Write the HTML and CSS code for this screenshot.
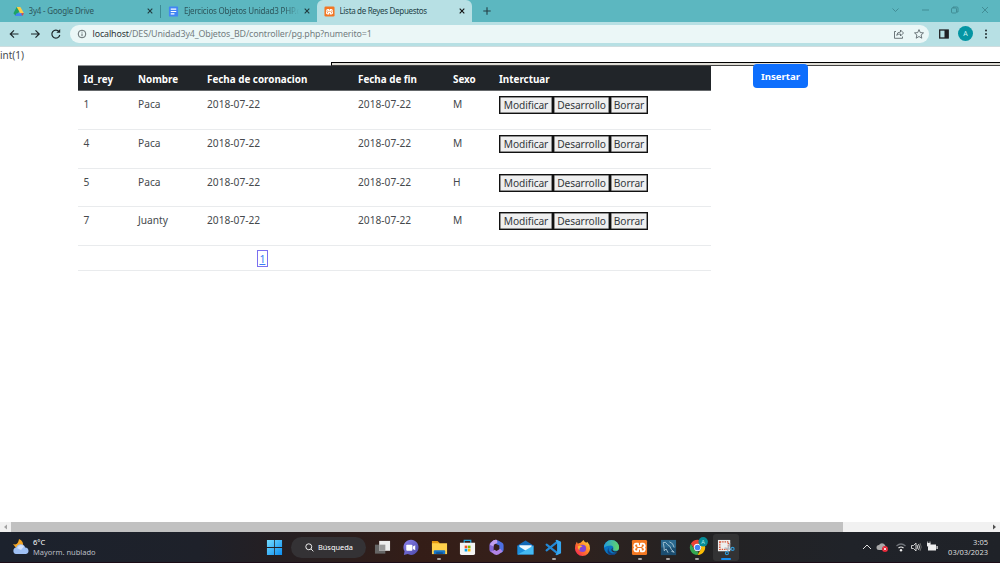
FILE: index.html
```html
<!DOCTYPE html>
<html lang="es">
<head>
<meta charset="utf-8">
<title>Lista de Reyes Depuestos</title>
<link rel="stylesheet" href="styles.css">
</head>
<body>
<div class="screen">
  <header class="tabs">
    <div class="tab tab-drive">
      <svg class="fav" viewBox="0 0 12 12"><path fill="#1fa463" d="M4 1h2L8 4.500 3 11 .5 8z"/><path fill="#ffcf48" d="M4 1h4l4 7H8z"/><path fill="#4285f4" d="M4 8h8l-2 3H2z"/><path fill="#ea4335" d="M9 8h3l-2 3z"/></svg>
      <span class="tab-title t1">3y4 - Google Drive</span>
      <svg class="close" viewBox="0 0 6 6"><path d="M.7.7l4.600 4.600M5.300.7L.7 5.300"/></svg>
    </div>
    <div class="tab tab-docs">
      <svg class="fav" viewBox="0 0 12 12"><rect x="1" y=".5" width="10" height="11" rx="1" fill="#4285f4"/><path stroke="#fff" stroke-width="1.300" d="M3 3.500h6M3 6h6M3 8.500h4"/></svg>
      <span class="tab-title t2">Ejercicios Objetos Unidad3 PHP.d</span>
      <svg class="close" viewBox="0 0 6 6"><path d="M.7.7l4.600 4.600M5.300.7L.7 5.300"/></svg>
    </div>
    <div class="tab tab-active">
      <svg class="fav" viewBox="0 0 12 12"><rect x=".5" y=".5" width="11" height="11" rx="1.500" fill="#f37623"/><path fill="none" stroke="#fff" stroke-width="1.300" d="M5 4H4a1 1 0 0 0 0 2 1 1 0 0 0 0 2.500h1V7h2v1.500h1A1 1 0 0 0 8 6a1 1 0 0 0 0-2H7v1.200H5z"/></svg>
      <span class="tab-title t3">Lista de Reyes Depuestos</span>
      <svg class="close dark" viewBox="0 0 6 6"><path d="M.7.7l4.600 4.600M5.300.7L.7 5.300"/></svg>
    </div>
    <svg class="newtab" viewBox="0 0 8 8"><path d="M4 .3v7.400M.3 4h7.400"/></svg>
    <svg class="wincontrols" viewBox="0 0 100 12"><path d="M2.500 4.500l3 3 3-3M32 6h7M92 3l6 6M98 3l-6 6"/><rect x="61.500" y="4" width="5" height="5" rx="1"/><path d="M63 4V3h4q1 0 1 1v4h-1"/></svg>
  </header>
  <nav class="toolbar">
    <svg class="navicons" viewBox="0 0 56 12"><path d="M9.500 6H1.300M5 2.300L1.300 6 5 9.700M22 6h8.200M26.500 2.300L30.200 6l-3.700 3.700M50 3.600A4 4 0 1 0 50.800 7"/><path class="solid" d="M51.200 1v3.800h-3.800z"/></svg>
    <div class="address">
      <svg class="info" viewBox="0 0 10 10"><circle cx="5" cy="5" r="3.800"/><path d="M5 4.500v2.700M5 2.700v.9"/></svg>
      <span class="url"><b>localhost</b>/DES/Unidad3y4_Objetos_BD/controller/pg.php?numerito=1</span>
      <svg class="actions" viewBox="0 0 32 12"><path d="M2 3.500H.5v6.800h8V8.500M2.700 7.300Q3 4 6.500 4V2l3 3-3 3V6Q4 6 2.700 7.300z"/><path d="M25 1.600l1.300 3 3.200.3-2.400 2.100.7 3.200L25 8.500l-2.800 1.700.7-3.200-2.400-2.100 3.200-.3z"/></svg>
    </div>
    <svg class="sidepanel" viewBox="0 0 10 10"><rect x=".7" y="1" width="8.500" height="8" fill="none" stroke="#202124" stroke-width="1.300"/><path fill="#202124" d="M5.500 1h3.700v8H5.500z"/></svg>
    <span class="avatar">A</span>
    <svg class="more" viewBox="0 0 4 12"><circle cx="2" cy="2.400" r="1"/><circle cx="2" cy="6" r="1"/><circle cx="2" cy="9.600" r="1"/></svg>
  </nav>
  <main class="page">
    <p class="dump">int(1)</p>
    <div class="overflow-box"></div>
    <div class="content">
      <div class="table">
        <div class="row head"><span>Id_rey</span><span>Nombre</span><span>Fecha de coronacion</span><span>Fecha de fin</span><span>Sexo</span><span>Interctuar</span></div>
        <div class="row"><span>1</span><span>Paca</span><span>2018-07-22</span><span>2018-07-22</span><span>M</span><div class="buttons"><button class="b1">Modificar</button><button class="b2">Desarrollo</button><button class="b3">Borrar</button></div></div>
        <div class="row"><span>4</span><span>Paca</span><span>2018-07-22</span><span>2018-07-22</span><span>M</span><div class="buttons"><button class="b1">Modificar</button><button class="b2">Desarrollo</button><button class="b3">Borrar</button></div></div>
        <div class="row"><span>5</span><span>Paca</span><span>2018-07-22</span><span>2018-07-22</span><span>H</span><div class="buttons"><button class="b1">Modificar</button><button class="b2">Desarrollo</button><button class="b3">Borrar</button></div></div>
        <div class="row last"><span>7</span><span>Juanty</span><span>2018-07-22</span><span>2018-07-22</span><span>M</span><div class="buttons"><button class="b1">Modificar</button><button class="b2">Desarrollo</button><button class="b3">Borrar</button></div></div>
        <div class="pager"><a class="pagelink">1</a></div>
      </div>
      <button class="insert">Insertar</button>
    </div>
  </main>
  <div class="scrollbar">
    <svg class="arrow" viewBox="0 0 11 10"><path fill="#a3a3a3" d="M7 2.500v5L4 5z"/></svg>
    <div class="thumb"></div>
    <svg class="arrow right" viewBox="0 0 11 10"><path fill="#505050" d="M4 2.500v5L7 5z"/></svg>
  </div>
  <footer class="taskbar">
    <svg class="weather" viewBox="0 0 18 18"><path fill="#f4a523" d="M7 1q5 2 4 8L4 10 1 6q5 2 6-5z"/><path fill="#9fc0f4" d="M4 16a3.300 3.300 0 0 1 .2-6.500 4.800 4.800 0 0 1 9 0A3.300 3.300 0 0 1 14 16z"/><path fill="#d2e2fd" d="M5 10q3-5 7-1.500L9 12z"/></svg>
    <div class="forecast"><span class="deg">6°C</span><span>Mayorm. nublado</span></div>
    <div class="apps">
      <svg class="app start" viewBox="0 0 18 18"><defs><linearGradient id="win" x2="1" y2="1"><stop stop-color="#74dcff"/><stop offset="1" stop-color="#0c8ef0"/></linearGradient></defs><path fill="url(#win)" d="M1 1h7.600v7.600H1zM9.400 1H17v7.600H9.400zM1 9.400h7.600V17H1zM9.400 9.400H17V17H9.400z"/></svg>
      <div class="search"><svg viewBox="0 0 10 10"><circle cx="4.200" cy="4.200" r="3.300"/><path d="M6.700 6.700L9.300 9.300"/></svg><span>Búsqueda</span></div>
      <div class="slot"><svg class="app" viewBox="0 0 18 18"><path fill="#666" d="M1 6h11v9.500H1z"/><path fill="#eee" d="M5.500 2H17v10.500H5.500z"/><path fill="#999" d="M5.500 6H12v6.500H5.500z"/></svg></div>
      <div class="slot"><svg class="app" viewBox="0 0 18 18"><defs><linearGradient id="chat" x2="1" y2="1"><stop stop-color="#8d83ee"/><stop offset="1" stop-color="#4947a8"/></linearGradient></defs><path fill="url(#chat)" d="M2 17l.7-4A8 8 0 1 1 6 16z"/><rect x="4.500" y="6" width="6.500" height="6.500" rx="1" fill="#fff"/><path fill="#fff" d="M11.500 8l2.500-1.500v5.500l-2.500-1.500z"/></svg></div>
      <div class="slot open"><svg class="app" viewBox="0 0 18 18"><path fill="#e59a13" d="M1 2h6l2 2v4H1z"/><path fill="#ffd04b" d="M1 4.500h16V16H1z"/><path fill="#1877c9" d="M4 12h10q1 0 1 1v3H3v-3q0-1 1-1z"/><path fill="#0c559c" d="M5.500 14h7v2h-7z"/></svg></div>
      <div class="slot"><svg class="app" viewBox="0 0 18 18"><path d="M5.500 5V1.500h7V5" fill="none" stroke="#24a7df" stroke-width="1.200"/><path fill="#f3f3f3" d="M1 4h16v11q0 2-2 2H3q-2 0-2-2z"/><path fill="#f25022" d="M6 7h2.800v2.800H6z"/><path fill="#7fba00" d="M9.400 7h2.800v2.800H9.400z"/><path fill="#00a4ef" d="M6 10.400h2.800v2.800H6z"/><path fill="#ffb900" d="M9.400 10.400h2.800v2.800H9.400z"/></svg></div>
      <div class="slot"><svg class="app" viewBox="0 0 18 18"><path fill="#4d6fe0" d="M10 1l5 3q1.500 1 1.500 2.500v5q0 1.500-1.500 2.500l-2 1.200-1-4.200V7L8 5z"/><path fill="#8568d6" d="M9.500 1Q6 .5 4 3 1.500 4 1.500 6.500v5q0 2 2 2.800L6 12V6l2-1.500z"/><path fill="#c1a0ee" d="M9.500 1Q6 .5 4 3L2 6l4 2V6l4-2z"/><path fill="#b184e5" d="M3 13.500l4-2 2 1.200 4-2.500 2.500 3L11 16.500q-2 1-4 0z"/></svg></div>
      <div class="slot"><svg class="app" viewBox="0 0 18 18"><path fill="#1269b8" d="M.5 7L9 1.500 17.500 7v9.500H.5z"/><path fill="#eef9ff" d="M2.500 6.500h13v4L9 13l-6.500-2.500z"/><path fill="#1b8fdd" d="M.5 7L11 13.500.5 16.500z"/><path fill="#45baf3" d="M17.500 7v9.500H.5L9 11.800z"/></svg></div>
      <div class="slot open"><svg class="app" viewBox="0 0 18 18"><path fill="none" stroke="#2388d5" stroke-width="2.300" stroke-linejoin="round" stroke-linecap="round" d="M13 3L1.700 12M1.700 6L13 15"/><path fill="#35a5ee" d="M12.500.7L17 2.800v12.400l-4.500 2.100-1.500-1 1.800-2V3.700L11 1.700z"/></svg></div>
      <div class="slot"><svg class="app" viewBox="0 0 18 18"><defs><linearGradient id="fox" x1="1" x2="0" y2="1"><stop stop-color="#ffe33b"/><stop offset=".5" stop-color="#ff7929"/><stop offset="1" stop-color="#f4155c"/></linearGradient></defs><path fill="url(#fox)" d="M3 3l1 2q2-1 3-1l3-3q1 2 3 3l1-1q3 3 3 7a8 8 0 0 1-16 0q0-4 2-7z"/><circle cx="9" cy="10" r="3.800" fill="#8045d4"/><path fill="#ffb931" d="M4 8q3-2 5 0-4 1-3 4-2-1-2-4z"/></svg></div>
      <div class="slot"><svg class="app" viewBox="0 0 18 18"><defs><linearGradient id="edge" x2="1"><stop stop-color="#229bdc"/><stop offset="1" stop-color="#65d765"/></linearGradient></defs><circle cx="9" cy="9" r="8" fill="#0873c2"/><path fill="url(#edge)" d="M1 9a8 8 0 0 1 16 0q0 4-5 3.500-2-.5-1-2.500 0-3-3-3-4 0-7 2z"/><path fill="#133f7d" d="M6 9q-1 4 3 6 3 1 6-1-2 3-6 3-5-1-4-6z"/><path fill="#2e2320" d="M10.500 9q-1.500 3 1 4 3 .8 5-1v2q-5 1-7-1-1.500-2 1-4z"/></svg></div>
      <div class="slot open"><svg class="app" viewBox="0 0 18 18"><rect x="1" y="1" width="16" height="16" rx="1.500" fill="#f37822"/><path fill="none" stroke="#fff" stroke-width="1.900" stroke-linejoin="round" d="M7.500 5H6a2 2 0 0 0-1 4 2 2 0 0 0 1 4h1.500v-2.500h3V13H12a2 2 0 0 0 1-4 2 2 0 0 0-1-4h-1.500v2.500h-3z"/></svg></div>
      <div class="slot open"><svg class="app" viewBox="0 0 18 18"><path fill="#2a688e" d="M1 1h16v16H1z"/><path fill="#1b4d70" d="M1 9h16v8H1z"/><path fill="none" stroke="#b2cddb" stroke-width=".9" d="M3 4q3-2 5 2 3 1 4 5l3 3-3-1M3.500 4.500q1 4 1 8l2-2 2 4M10 3q4 1 5 6"/></svg></div>
      <div class="slot open"><svg class="app chrome" viewBox="0 0 22 18"><path fill="#ea4335" d="M2 5a8 8 0 0 1 14 0H9l-3 6z"/><path fill="#34a853" d="M2 5l4 7 4 2-1 3A8 8 0 0 1 2 5z"/><path fill="#fbbc04" d="M9 5h7a8 8 0 0 1-7 12l4-7z"/><circle cx="9" cy="9" r="3.900" fill="#fff"/><circle cx="9" cy="9" r="3" fill="#4285f4"/><circle cx="15" cy="3" r="5" fill="#078b96"/><text x="15" y="5" text-anchor="middle" class="badge-text">A</text></svg></div>
      <div class="slot active"><svg class="app" viewBox="0 0 18 18"><path fill="#eee" d="M1 1h13v12H1z"/><path fill="none" stroke="#d65032" stroke-width="1.500" stroke-dasharray="1.500 1" d="M3 3h9v8H3z"/><path fill="none" stroke="#aeb8c2" stroke-width="1.400" d="M13.500 4.500l-2.500 9M8 9.500l7 1.500"/><circle cx="10.500" cy="15" r="1.600" fill="none" stroke="#329ad5" stroke-width="1.200"/><circle cx="16.500" cy="10.500" r="1.600" fill="none" stroke="#329ad5" stroke-width="1.200"/></svg></div>
    </div>
    <svg class="tray" viewBox="0 0 78 14"><path fill="none" stroke="#ddd" stroke-width="1" d="M1 9l4-4 4 4"/><path fill="#a9a9a9" d="M17 10a2.500 2.500 0 0 1 0-5 3.500 3.500 0 0 1 6 0l2 5z"/><circle cx="23" cy="9" r="3" fill="#e42434"/><path stroke="#fff" stroke-width=".8" d="M21.800 7.800l2.400 2.400M24.200 7.800l-2.400 2.400"/><path fill="none" stroke="#70747a" stroke-width="1.200" d="M34.500 6q4.500-4 9 0"/><path fill="none" stroke="#eee" stroke-width="1.200" d="M36.500 8q2.500-2 5 0"/><circle cx="39" cy="10.200" r="1.200" fill="#eee"/><path fill="none" stroke="#ddd" stroke-width=".9" d="M49.500 5.500h2L54 3v8L51.500 8.500h-2zM55 5q1.500 2 0 4M56.500 4q2 3 0 6"/><path fill="none" stroke="#777" stroke-width=".8" d="M58 3q2.500 4 0 8"/><path fill="#eee" d="M66 4.500h8v6h-8zM74.500 6h1.200v3h-1.200zM65 3h3.500v3q-1.700 2-3.500 0z"/><path stroke="#eee" stroke-width=".8" d="M65.700 1.500v2M68 1.500v2"/></svg>
    <div class="clock"><span>3:05</span><span>03/03/2023</span></div>
  </footer>
</div>
</body>
</html>
```
FILE: styles.css
```css
* { box-sizing: border-box; }
body { margin: 0; overflow: hidden; font-family: "Noto Sans", "Open Sans", sans-serif; }
svg { display: block; flex: none; overflow: visible; }
.screen { width: 1000px; height: 563px; display: flex; flex-direction: column; background: #fff; }

.tabs { height: 22px; flex: none; display: flex; align-items: center; background: #5cb7c0; font-size: 8px; letter-spacing: -.2px; color: #2d555b; }
.tab { height: 22px; display: flex; align-items: center; white-space: nowrap; }
.tab-drive { width: 161px; padding-left: 13px; }
.tab-drive::after { content: ""; width: 1px; height: 13px; margin-left: 7px; background: #3c8b95; }
.tab-docs { width: 156px; padding-left: 7px; }
.tab-active { width: 155px; padding-left: 7px; background: #b7e0e4; color: #244349; border-radius: 6px 6px 0 0; }
.fav { width: 11px; height: 11px; }
.tab-title { margin-left: 4.5px; overflow: hidden; line-height: 14px; }
.t1 { width: 119.5px; }
.t2 { width: 115px; margin-left: 5px; -webkit-mask-image: linear-gradient(90deg, #000 88%, transparent); }
.t3 { width: 119.5px; letter-spacing: -.32px; }
.close { width: 6px; height: 6px; fill: none; stroke: #203a3e; stroke-width: 1.1; }
.t2 + .close { margin-left: 4.500px; }
.close.dark { stroke: #111; }
.newtab { width: 8px; height: 8px; margin-left: 11px; fill: none; stroke: #233f44; stroke-width: 1.1; }
.wincontrols { width: 100px; height: 12px; margin-left: 399px; margin-bottom: 3px; fill: none; stroke: #3b838c; stroke-width: .8; }

.toolbar { height: 25px; flex: none; display: flex; align-items: center; padding: 0 9px 1px 9px; background: #b7e0e4; border-bottom: 1px solid #cfdddf; }
.navicons { width: 56px; height: 12px; fill: none; stroke: #1d2629; stroke-width: 1.2; }
.navicons .solid { fill: #1d2629; stroke: none; }
.address { width: 859px; height: 18px; margin-left: 5px; border-radius: 9px; background: #ebf7f7; display: flex; align-items: center; }
.info { width: 10px; height: 10px; margin-left: 7px; fill: none; stroke: #525c5f; stroke-width: .9; }
.url { width: 801px; margin-left: 5.500px; font-size: 8.9px; letter-spacing: -.13px; color: #747d80; white-space: nowrap; }
.url b { font-weight: 400; color: #2e3639; }
.actions { width: 32px; height: 12px; fill: none; stroke: #566165; stroke-width: .85; }
.sidepanel { width: 10px; height: 10px; margin-left: 10px; }
.avatar { width: 15px; height: 15px; margin-left: 9px; border-radius: 50%; background: #0595a3; color: #c9f2f2; font-size: 7px; line-height: 15px; text-align: center; }
.more { width: 4px; height: 12px; margin-left: 11px; fill: #222c2f; }

.page { height: 475px; flex: none; position: relative; color: #45494d; font-size: 10.2px; }
.dump { margin: 0; height: 18px; line-height: 17px; font-size: 10px; }
.overflow-box { position: absolute; left: 331px; top: 15px; width: 680px; height: 4px; border: 1px solid #000; border-bottom-color: #444; background: #dedcd5; z-index: 1; }
.content { display: flex; align-items: flex-start; padding-left: 78px; }
.table { width: 633px; }
.row { height: 38.75px; display: grid; grid-template-columns: 54.5px 69px 151px 95px 46px 1fr; padding-left: 5.500px; line-height: 14px; padding-top: 6px; border-bottom: 1px solid #e9ebed; }
.head { height: 26px; padding-top: 5.500px; background: #212529; border-top: 1px solid #8e9092; border-bottom-color: #65686b; color: #fff; font-weight: 700; font-size: 9.85px; }
.row.last { padding-top: 5.500px; }
.buttons { display: flex; height: 18px; margin-top: -1px; }
.buttons button { height: 18px; padding: 0; border: 1px solid #111; box-shadow: inset 0 0 0 .5px #333; background: #efefef; color: #34383c; font: 10.2px/16px "Noto Sans", sans-serif; letter-spacing: -.1px; }
.buttons .b1 { width: 54px; }
.buttons .b2 { width: 57px; }
.buttons .b3 { width: 38px; }
.pager { height: 25px; padding: 4px 0 0 179px; border-bottom: 1px solid #e9ebed; }
.pagelink { display: block; width: 11px; height: 17px; border: 1px solid #7b70f0; color: #367ff7; text-align: center; text-decoration: underline; line-height: 17px; font-size: 10.500px; }
.insert { width: 55px; height: 24px; margin-left: 42px; padding: 0; border: 0; border-radius: 4px; background: #0d6efd; color: #fff; font: 700 9.6px "Noto Sans", sans-serif; position: relative; z-index: 2; margin-top: -1px; }

.scrollbar { height: 10px; flex: none; display: flex; background: #f1f1f1; }
.arrow { width: 11px; height: 10px; }
.thumb { width: 832px; height: 10px; background: #c1c1c1; }
.right { margin-left: auto; }

.taskbar { height: 31px; flex: none; display: flex; align-items: center; background: linear-gradient(90deg, #1c222d 0, #1e212a 20%, #251f22 28%, #341d17 42%, #35201a 52%, #2b2220 61%, #232223 70%, #202329 85%, #1f2228 100%); border-bottom: 1px solid #1b0c17; color: #ddd; font-size: 7.5px; white-space: nowrap; }
.weather { width: 18px; height: 18px; margin-left: 12px; }
.forecast { width: 229px; margin-left: 3px; display: flex; flex-direction: column; line-height: 10.500px; color: #bbbec3; }
.deg { color: #fff; }
.apps { display: flex; align-items: center; width: 600px; margin-left: 3px; height: 30px; }
.app { width: 17px; height: 17px; }
.start { margin-left: .5px; }
.search { width: 75px; height: 21px; margin: 0 1.700px 0 8.500px; border-radius: 11px; background: #343235; display: flex; align-items: center; padding-left: 14px; color: #fff; font-size: 7.4px; }
.search svg { width: 9px; height: 9px; margin-right: 4px; fill: none; stroke: #fff; stroke-width: 1; }
.slot { width: 26px; height: 27px; margin: 0 1.325px; flex: none; display: flex; align-items: center; justify-content: center; position: relative; border-radius: 3px; }
.slot.open::after, .slot.active::after { content: ""; position: absolute; bottom: 1px; left: 11px; width: 4px; height: 2px; border-radius: 1px; background: #a8a5a4; }
.slot.active { background: #333334; }
.slot.active::after { left: 8px; width: 10px; background: #168ff2; }
.chrome { width: 20.800px; margin-left: 5px; }
.badge-text { font: 6px "Noto Sans", sans-serif; fill: #b5eeee; }
.tray { width: 78px; height: 14px; margin-left: -3px; }
.clock { width: 60px; margin-left: -12px; margin-right: 12px; flex: none; display: flex; flex-direction: column; text-align: right; line-height: 10.500px; }
```
